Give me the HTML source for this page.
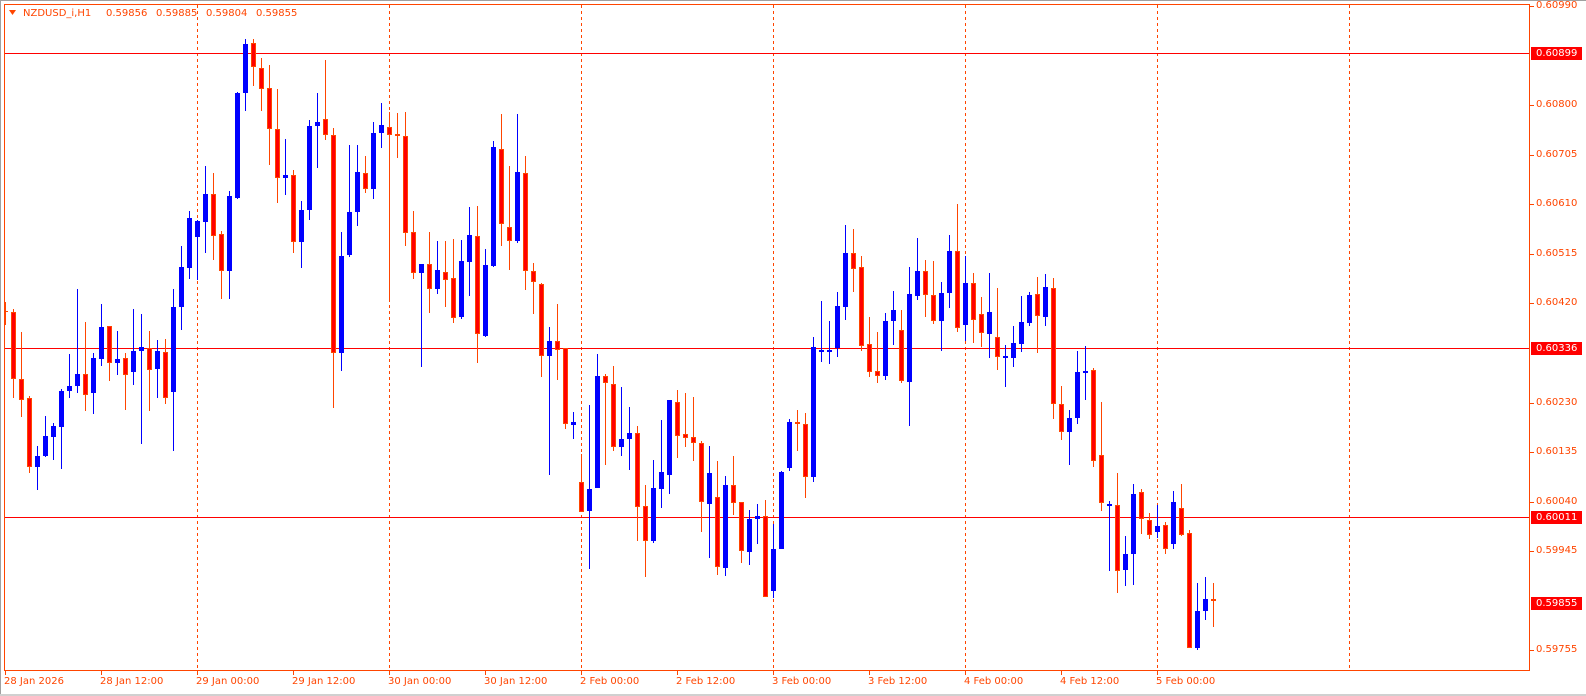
<!DOCTYPE html>
<html><head><meta charset="utf-8"><style>
html,body{margin:0;padding:0;background:#fff;}
body{width:1586px;height:696px;position:relative;overflow:hidden;font-family:"DejaVu Sans","Liberation Sans",sans-serif;font-size:10px;}
.t{position:absolute;color:#ff4500;white-space:nowrap;line-height:12px;}
.pl{position:absolute;left:1536px;color:#ff4500;line-height:12px;}
.box{position:absolute;left:1531px;width:51px;height:13px;background:#ff0000;color:#fff;line-height:13px;padding-left:5px;box-sizing:border-box;}
</style></head><body>
<svg id="s" width="1586" height="696" style="position:absolute;left:0;top:0" shape-rendering="crispEdges"></svg>
<div class="t" style="left:23px;top:8px">NZDUSD_i,H1</div>
<div class="t" style="left:106px;top:8px">0.59856</div>
<div class="t" style="left:156px;top:8px">0.59885</div>
<div class="t" style="left:206px;top:8px">0.59804</div>
<div class="t" style="left:256px;top:8px">0.59855</div>
<div id="lab"></div>
<script>
var s=document.getElementById('s'),NS='http://www.w3.org/2000/svg';
function r(x,y,w,h,f){var e=document.createElementNS(NS,'rect');e.setAttribute('x',x);e.setAttribute('y',y);e.setAttribute('width',w);e.setAttribute('height',h);e.setAttribute('fill',f);s.appendChild(e);}
function ln(x1,y1,x2,y2,c,d){var e=document.createElementNS(NS,'line');e.setAttribute('x1',x1);e.setAttribute('y1',y1);e.setAttribute('x2',x2);e.setAttribute('y2',y2);e.setAttribute('stroke',c);e.setAttribute('stroke-width',1);if(d)e.setAttribute('stroke-dasharray',d);s.appendChild(e);}
var OR='#ff4500';
r(0,0,1586,1,'#a0a0a0');r(0,0,1,696,'#a0a0a0');r(0,694,1586,2,'#d0d0d0');
r(4,4,1526,1,OR);r(4,4,1,667,OR);r(1529,4,1,667,OR);r(4,670,1526,1,OR);
var p=document.createElementNS(NS,'path');p.setAttribute('d','M9 10 L16 10 L12.5 15 Z');p.setAttribute('fill',OR);p.setAttribute('shape-rendering','auto');s.appendChild(p);
[197,389,581,773,965,1157,1349].forEach(function(x){ln(x+.5,5,x+.5,670,OR,'3,3');});
[53,348,517].forEach(function(y){r(5,y,1524,1,'#ff0000');});
// entries: [close,high,low,open] in y pixels
var D=[[379,309,398,312],[400,332,417,379],[467,396,473,398],[456,446,490,467],[436,416,457,456],[426,423,460,437],[391,389,469,427],[386,354,398,391],[374,289,393,386],[395,322,411,374],[358,353,414,393],[327,304,366,359],[363,326,381,326],[359,331,375,363],[375,353,410,358],[351,309,385,372],[347,314,444,351],[370,331,411,348],[351,340,398,369],[398,339,404,352],[307,289,451,392],[267,246,330,307],[218,211,279,268],[221,220,280,237],[194,166,253,222],[236,173,260,194],[271,231,299,234],[196,191,299,271],[93,92,199,198],[44,39,111,93],[67,39,86,43],[89,58,111,68],[129,65,165,88],[178,89,203,129],[175,139,195,178],[242,170,253,175],[210,201,268,242],[126,120,220,210],[122,93,168,126],[135,60,140,119],[353,128,408,135],[256,232,371,353],[212,145,257,255],[172,145,226,212],[189,156,193,173],[133,122,199,189],[125,103,148,133],[135,112,302,127],[135,113,158,134],[233,112,246,136],[273,211,279,232],[264,264,367,273],[289,232,313,264],[270,241,294,289],[280,241,307,272],[318,239,323,278],[261,240,319,317],[235,207,296,262],[334,206,363,236],[265,249,337,336],[147,141,267,266],[224,114,246,149],[241,166,270,227],[172,114,243,241],[271,156,290,173],[282,263,314,271],[356,283,377,284],[341,327,475,356],[350,304,380,341],[424,348,429,348],[422,412,439,425],[512,454,512,482],[489,405,569,511],[376,354,488,488],[383,374,465,376],[447,366,451,384],[439,387,456,447],[433,407,470,439],[507,426,541,433],[541,485,577,506],[488,460,543,541],[472,420,508,489],[400,400,494,475],[436,390,458,402],[438,393,447,434],[443,397,461,437],[502,441,532,443],[473,446,558,504],[567,461,575,497],[485,476,576,568],[503,456,515,485],[551,502,563,502],[519,510,565,552],[516,504,544,519],[597,500,597,516],[549,524,598,591],[472,471,549,549],[422,419,471,468],[424,410,451,422],[477,413,498,424],[347,337,482,477],[350,301,362,352],[350,321,364,351],[306,292,357,348],[253,225,320,307],[269,229,292,253],[346,256,351,267],[372,317,377,344],[376,332,383,371],[321,313,380,376],[310,291,345,321],[381,310,383,330],[294,267,426,382],[271,238,300,296],[295,260,317,271],[321,261,324,295],[293,282,351,321],[251,235,308,293],[328,204,332,251],[283,256,341,325],[320,273,343,283],[333,297,347,314],[312,273,358,334],[357,288,370,337],[356,345,387,357],[343,326,367,358],[322,296,352,344],[295,292,326,323],[316,277,353,294],[287,274,326,317],[404,278,419,288],[432,386,440,404],[418,410,465,432],[372,351,424,418],[371,346,400,372],[461,368,467,370],[503,402,511,455],[504,501,571,505],[571,473,593,505],[554,536,586,570],[494,484,585,554],[519,489,534,492],[535,513,539,520],[526,505,538,532],[549,522,554,525],[502,491,549,544],[535,484,536,508],[648,530,648,533],[611,583,650,648],[599,577,620,611],[599,583,627,599]];
r(5,302,1,23,OR);r(5,311,3,1,OR);
D.forEach(function(c,i){
 var x=13+8*i,cl=c[0],h=c[1],l=c[2],o=c[3],bull=cl<o;
 var col=bull?'#0000ff':OR;
 r(x,h,1,Math.max(l-h,1),col);
 var t=Math.min(o,cl),b=Math.max(o,cl),hh=Math.max(b-t,1);
 if(hh<2){r(x-2,t,5,2,col);}
 else if(bull){r(x-2,t,5,hh,'#0000ff');}
 else{r(x-2,t,5,hh,OR);if(hh>2)r(x-1,t+1,3,hh-2,'#ff0000');}
});
var lab=document.getElementById('lab'),html='';
function Y(p){return 53.3+(0.60899-p)*52200;}
[0.60990,0.60800,0.60705,0.60610,0.60515,0.60420,0.60230,0.60135,0.60040,0.59945,0.59755].forEach(function(a){var y=Math.round(Y(a));r(1530,y,4,1,OR);html+='<div class="pl" style="top:'+(y-6)+'px">'+a.toFixed(5)+'</div>';});
[[0.60899,53],[0.60336,348],[0.60011,517],[0.59855,603]].forEach(function(a){html+='<div class="box" style="top:'+(a[1]-6)+'px">'+a[0].toFixed(5)+'</div>';});
var T=['28 Jan 2026','28 Jan 12:00','29 Jan 00:00','29 Jan 12:00','30 Jan 00:00','30 Jan 12:00','2 Feb 00:00','2 Feb 12:00','3 Feb 00:00','3 Feb 12:00','4 Feb 00:00','4 Feb 12:00','5 Feb 00:00'];
T.forEach(function(t,i){var x=5+96*i;r(x,671,1,4,OR);html+='<div class="t" style="left:'+(x-1)+'px;top:676px">'+t+'</div>';});
lab.innerHTML=html;
</script>
</body></html>
